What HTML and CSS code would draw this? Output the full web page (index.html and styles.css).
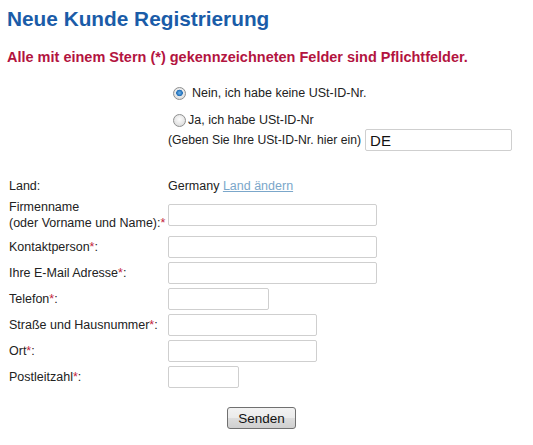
FILE: index.html
```html
<!DOCTYPE html>
<html lang="de">
<head>
  <meta charset="UTF-8">
  <title>Neue Kunde Registrierung</title>
  <link rel="stylesheet" href="styles.css">
</head>
<body>
  <div class="page">
    <h1 class="title">Neue Kunde Registrierung</h1>
    <p class="notice">Alle mit einem Stern (*) gekennzeichneten Felder sind Pflichtfelder.</p>

    <form class="register">
      <div class="vat">
        <label class="radio-row first">
          <input type="radio" name="vat" checked>
          <span>Nein, ich habe keine USt-ID-Nr.</span>
        </label>
        <label class="radio-row">
          <input type="radio" name="vat">
          <span>Ja, ich habe USt-ID-Nr</span>
        </label>
        <div class="vat-entry">
          <span>(Geben Sie Ihre USt-ID-Nr. hier ein)</span>
          <input type="text" class="field vat-field" value="DE">
        </div>
      </div>

      <div class="fields">
        <div class="lbl">Land:</div>
        <div class="val">Germany <a href="#" class="change">Land ändern</a></div>

        <div class="lbl two-line">Firmenname<br>(oder Vorname und Name):<span class="req">*</span></div>
        <div class="val"><input type="text" class="field wide"></div>

        <div class="lbl">Kontaktperson<span class="req">*</span>:</div>
        <div class="val"><input type="text" class="field wide"></div>

        <div class="lbl">Ihre E-Mail Adresse<span class="req">*</span>:</div>
        <div class="val"><input type="text" class="field wide"></div>

        <div class="lbl">Telefon<span class="req">*</span>:</div>
        <div class="val"><input type="text" class="field short"></div>

        <div class="lbl">Straße und Hausnummer<span class="req">*</span>:</div>
        <div class="val"><input type="text" class="field mid"></div>

        <div class="lbl">Ort<span class="req">*</span>:</div>
        <div class="val"><input type="text" class="field mid"></div>

        <div class="lbl">Postleitzahl<span class="req">*</span>:</div>
        <div class="val"><input type="text" class="field zip"></div>
      </div>

      <div class="actions">
        <button type="submit" class="send">Senden</button>
      </div>
    </form>
  </div>
</body>
</html>
```

FILE: styles.css
```css
body {
  margin: 0;
  font-family: "Liberation Sans", Arial, sans-serif;
  font-size: 12.5px;
  color: #222;
  background: #fff;
}
.page {
  padding: 7px 0 0 7px;
}
.title {
  margin: 0;
  font-size: 20.8px;
  line-height: 24px;
  font-weight: bold;
  color: #1a5ca8;
}
.notice {
  margin: 18px 0 0 0;
  font-size: 14.5px;
  line-height: 16px;
  font-weight: bold;
  color: #b3143f;
}
.register {
  width: 505px;
  padding-left: 2px;
}
.vat {
  display: flex;
  flex-direction: column;
  margin: 20px 0 0 159px;
}
.radio-row {
  display: flex;
  align-items: center;
  height: 16px;
}
.radio-row.first {
  margin-bottom: 11px;
}
.radio-row.first span {
  margin-left: 4px;
}
.radio-row input {
  appearance: none;
  -webkit-appearance: none;
  width: 13px;
  height: 13px;
  margin: 0 2px 0 5px;
  border: 1px solid #8e8f8f;
  border-radius: 50%;
  background: radial-gradient(circle at 50% 40%, #fdfdfd, #d4d4d4);
  box-sizing: border-box;
}
.radio-row input:checked {
  background:
    radial-gradient(circle at 50% 45%, #6fb6ee 0, #1f6cb5 3px, transparent 3.6px),
    radial-gradient(circle at 50% 40%, #fdfdfd, #d4d4d4);
}
.vat-entry {
  display: flex;
  align-items: center;
  gap: 4px;
  margin-top: 1px;
  white-space: nowrap;
}
.vat-entry span {
  flex-shrink: 0;
  font-size: 12.2px;
}
.field {
  height: 22px;
  box-sizing: border-box;
  border: 1px solid #cfcfcf;
  border-radius: 2px;
  padding: 0 4px;
  font-family: "Liberation Sans", Arial, sans-serif;
  font-size: 13px;
  color: #111;
  background: #fff;
}
.vat-field {
  width: 147px;
  flex-shrink: 0;
  font-size: 15px;
}
.wide { width: 209px; }
.mid { width: 149px; }
.short { width: 101px; }
.zip { width: 71px; }

.fields {
  display: grid;
  grid-template-columns: 159px auto;
  align-items: center;
  row-gap: 4px;
  margin-top: 27px;
}
.lbl, .val {
  line-height: 16px;
}
.val .field {
  display: block;
}
.two-line {
  padding: 1px 0;
}
.req {
  color: #c3243d;
}
.change {
  color: #7ba7ca;
}
.actions {
  display: flex;
  justify-content: center;
  margin-top: 19px;
}
.send {
  width: 69px;
  height: 22px;
  padding: 0;
  border: 1px solid #707070;
  border-radius: 3px;
  background: linear-gradient(#f2f2f2 0, #ebebeb 50%, #dddddd 51%, #cfcfcf 100%);
  font-family: "Liberation Sans", Arial, sans-serif;
  font-size: 13.5px;
  color: #111;
}
```
